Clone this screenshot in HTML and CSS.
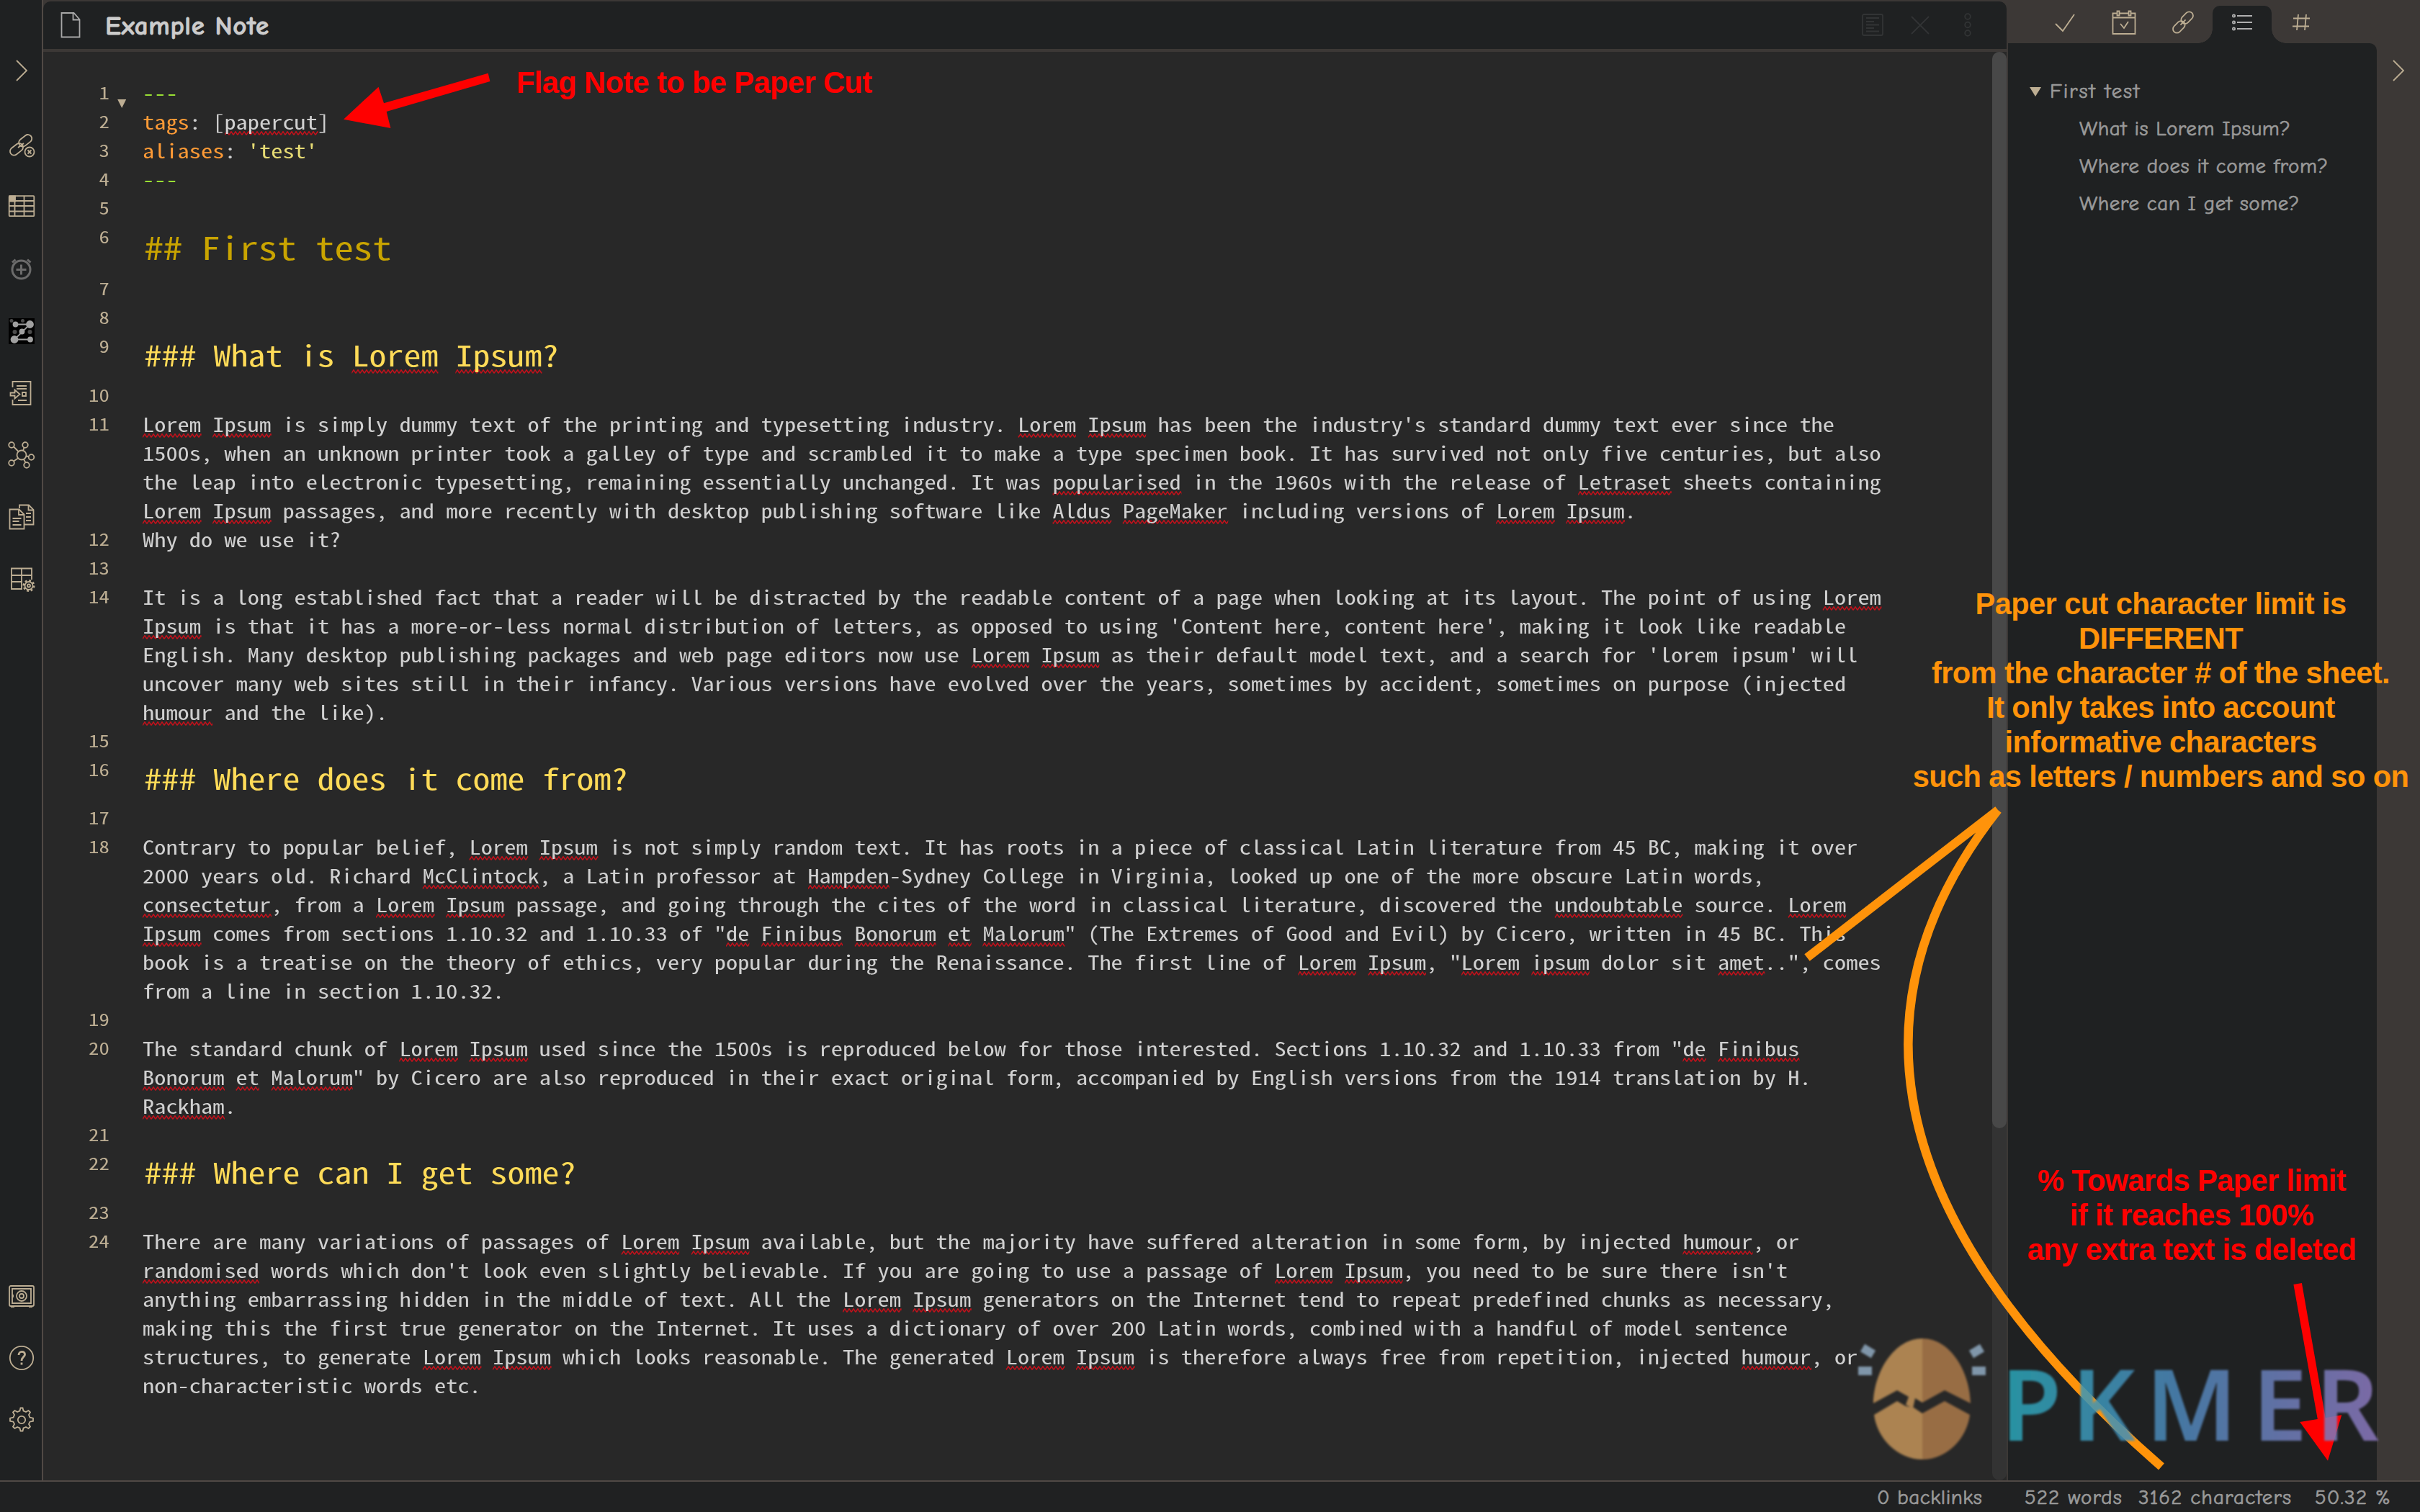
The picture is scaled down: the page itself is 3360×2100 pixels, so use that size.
FILE: index.html
```
<!DOCTYPE html>
<html lang="en">
<head>
  <meta charset="UTF-8">
  <meta name="viewport" content="width=device-width, initial-scale=1.0">
  <title>Example Note</title>
  <link rel="stylesheet" href="styles.css">
</head>
<body>
  <div class="app">
    <div class="workspace">
      <!-- Left ribbon -->
      <nav class="ribbon">
        <div class="ribbon-group">
          <div class="ribbon-item collapse"><svg width="58" height="40" viewBox="0 0 58 40"><path d="M23 6l14 14-14 14"/></svg></div>
          <div class="ribbon-item"><svg width="58" height="40" viewBox="0 0 58 40"><g transform="translate(0 2) rotate(-38 29 18)"><rect x="11" y="13" width="20" height="11" rx="5.5"/><rect x="28" y="11" width="20" height="11" rx="5.5"/><path d="M24 18h10"/></g><circle class="solid-bg" cx="41" cy="29" r="6.500"/><path d="M38.500 26.500l5 5M43.500 26.500l-5 5"/></svg></div>
          <div class="ribbon-item"><svg width="58" height="40" viewBox="0 0 58 40"><g transform="translate(0 -1.500)"><rect x="12.700" y="5.700" width="34.600" height="28" rx="1"/><path d="M20.500 6v28M33.500 6v28M13 12.500h34M13 19.500h34M13 27h34"/><path class="fill" d="M13 6h8v7h-8z"/></g></svg></div>
          <div class="ribbon-item dim"><svg width="58" height="40" viewBox="0 0 58 40"><circle cx="29.500" cy="20.500" r="12.500"/><path d="M29.500 13.500v14M22.500 20.500h14M17 10.500l4.500-4M42.500 10.500l-4.500-4"/></svg></div>
          <div class="ribbon-item"><svg width="58" height="40" viewBox="0 0 58 40"><path class="black" d="M12 2h36v36H12z"/><g class="dark"><circle cx="16" cy="5.500" r="2.500"/><circle cx="31.500" cy="5.500" r="2.500"/><circle cx="20.500" cy="21" r="3"/><circle cx="41.500" cy="21" r="3"/></g><g class="light"><path d="M21.500 10.500h20L20 31.500h22"/><circle cx="21.500" cy="10.500" r="3"/><circle cx="41.500" cy="10.500" r="4.500"/><circle cx="30.500" cy="20.500" r="3"/><circle cx="20" cy="31.500" r="4.500"/><circle cx="42" cy="31.500" r="3"/></g></svg></div>
          <div class="ribbon-item"><svg width="58" height="40" viewBox="0 0 58 40"><path d="M17.500 12V4h25v32h-25v-7M23 10h14M23 14h14M25 30h12"/><path d="M14.500 19.500h6v-4l7 6-7 6v-4h-6zM31 19h5v5h-5z"/></svg></div>
          <div class="ribbon-item"><svg width="58" height="40" viewBox="0 0 58 40"><circle cx="30" cy="20" r="6.500"/><circle cx="16" cy="6" r="3.800"/><circle cx="35" cy="6" r="3.800"/><circle cx="43.500" cy="23" r="3.800"/><circle cx="37" cy="34" r="3.800"/><circle cx="16" cy="31" r="3.800"/><path d="M19 8.500l6.500 6.500M33.500 9.500L32 14M36.500 21.500l3.500.700M33 26l2.500 4.500M19 28.500l6-4"/></svg></div>
          <div class="ribbon-item"><svg width="58" height="40" viewBox="0 0 58 40"><path d="M27 8V3.500h13l6.500 6.500v20.500H34"/><path d="M39.500 4v6.500h7M36 15h7M36 20h7M36 25h7"/><path d="M13.500 9.500h13l7 7v20h-20z"/><path d="M26 10v7h7M17.500 22h12M17.500 26h9M17.500 31h12"/></svg></div>
          <div class="ribbon-item"><svg width="58" height="40" viewBox="0 0 58 40"><g transform="translate(0 1)"><path d="M31 33H16V4.500h28V20M16 14h28M30 5v28M16 23h15"/><circle cx="40" cy="28.500" r="5.500"/><circle cx="40" cy="28.500" r="2"/><circle class="teeth" cx="40" cy="28.500" r="7"/></g></svg></div>
        </div>
        <div class="ribbon-group">
          <div class="ribbon-item"><svg width="58" height="40" viewBox="0 0 58 40"><rect x="13" y="6" width="34" height="28" rx="2"/><path d="M17 10h26v20H17zM15 35h5M40 35h5M18 18v4"/><circle cx="30" cy="20" r="7"/><circle cx="30" cy="20" r="3"/></svg></div>
          <div class="ribbon-item"><svg width="58" height="40" viewBox="0 0 58 40"><circle cx="30" cy="20" r="16.200"/><path class="thick" d="M26 16c0-6 9-6 8.500-.500C34.200 18.500 30 19 30 24M30 26.500v3"/></svg></div>
          <div class="ribbon-item"><svg width="58" height="40" viewBox="0 0 58 40"><path d="M27.500 7.500l1-4h3l1 4 3.500 1.500 3.500-2 2.500 2.500-2 3.500 1.500 3.700 4.500 1v4l-4.500 1-1.500 3.300 2 3.500-2.500 2.500-3.500-2-3.500 1.500-1 4h-3l-1-4-3.500-1.500-3.500 2-2.500-2.500 2-3.500-1.500-3.300-4.500-1v-4l4.500-1 1.500-3.700-2-3.500 2.500-2.500 3.500 2z"/><circle cx="30" cy="20" r="5.200"/></svg></div>
        </div>
      </nav>

      <!-- Note -->
      <main class="note">
        <header class="note-header">
          <svg class="file-icon" width="28" height="36" viewBox="0 0 28 36"><path d="M1.500 1h17l8 9v24.500h-25zM17.500 1v9.500h9"/></svg>
          <h1>Example Note</h1>
          <div class="note-actions">
            <svg width="66" height="40" viewBox="0 0 66 40"><rect x="19" y="5" width="28" height="29" rx="2"/><path d="M24 10h18M24 15h11M24 19.500h18M24 24h11M24 28.500h18"/></svg>
            <svg width="66" height="40" viewBox="0 0 66 40"><path d="M21 8l24 24M45 8L21 32"/></svg>
            <svg width="66" height="40" viewBox="0 0 66 40"><circle cx="33" cy="8" r="3.800"/><circle cx="33" cy="19.500" r="3.800"/><circle cx="33" cy="31" r="3.800"/></svg>
          </div>
        </header>
        <div class="editor">
          <div class="code">
            <div class="row"><span class="num">1<i class="fold"></i></span><p class="dash">---</p></div>
            <div class="row"><span class="num">2</span><p><b>tags</b>: [<u>papercut</u>]</p></div>
            <div class="row"><span class="num">3</span><p><b>aliases</b>: <em>'test'</em></p></div>
            <div class="row"><span class="num">4</span><p class="dash">---</p></div>
            <div class="row"><span class="num">5</span><p></p></div>
            <div class="row row-h2"><span class="num">6</span><h2>## First test</h2></div>
            <div class="row"><span class="num">7</span><p></p></div>
            <div class="row"><span class="num">8</span><p></p></div>
            <div class="row row-h3"><span class="num">9</span><h3>### What is <u>Lorem</u> <u>Ipsum</u>?</h3></div>
            <div class="row"><span class="num">10</span><p></p></div>
            <div class="row"><span class="num">11</span><p><u>Lorem</u> <u>Ipsum</u> is simply dummy text of the printing and typesetting industry. <u>Lorem</u> <u>Ipsum</u> has been the industry's standard dummy text ever since the
1500s, when an unknown printer took a galley of type and scrambled it to make a type specimen book. It has survived not only five centuries, but also
the leap into electronic typesetting, remaining essentially unchanged. It was <u>popularised</u> in the 1960s with the release of <u>Letraset</u> sheets containing
<u>Lorem</u> <u>Ipsum</u> passages, and more recently with desktop publishing software like <u>Aldus</u> <u>PageMaker</u> including versions of <u>Lorem</u> <u>Ipsum</u>.</p></div>
            <div class="row"><span class="num">12</span><p>Why do we use it?</p></div>
            <div class="row"><span class="num">13</span><p></p></div>
            <div class="row"><span class="num">14</span><p>It is a long established fact that a reader will be distracted by the readable content of a page when looking at its layout. The point of using <u>Lorem</u>
<u>Ipsum</u> is that it has a more-or-less normal distribution of letters, as opposed to using 'Content here, content here', making it look like readable
English. Many desktop publishing packages and web page editors now use <u>Lorem</u> <u>Ipsum</u> as their default model text, and a search for 'lorem ipsum' will
uncover many web sites still in their infancy. Various versions have evolved over the years, sometimes by accident, sometimes on purpose (injected
<u>humour</u> and the like).</p></div>
            <div class="row"><span class="num">15</span><p></p></div>
            <div class="row row-h3"><span class="num">16</span><h3>### Where does it come from?</h3></div>
            <div class="row"><span class="num">17</span><p></p></div>
            <div class="row"><span class="num">18</span><p>Contrary to popular belief, <u>Lorem</u> <u>Ipsum</u> is not simply random text. It has roots in a piece of classical Latin literature from 45 BC, making it over
2000 years old. Richard <u>McClintock</u>, a Latin professor at <u>Hampden</u>-Sydney College in Virginia, looked up one of the more obscure Latin words,
<u>consectetur</u>, from a <u>Lorem</u> <u>Ipsum</u> passage, and going through the cites of the word in classical literature, discovered the <u>undoubtable</u> source. <u>Lorem</u>
<u>Ipsum</u> comes from sections 1.10.32 and 1.10.33 of "<u>de</u> <u>Finibus</u> <u>Bonorum</u> <u>et</u> <u>Malorum</u>" (The Extremes of Good and Evil) by Cicero, written in 45 BC. This
book is a treatise on the theory of ethics, very popular during the Renaissance. The first line of <u>Lorem</u> <u>Ipsum</u>, "<u>Lorem</u> <u>ipsum</u> dolor sit <u>amet</u>..", comes
from a line in section 1.10.32.</p></div>
            <div class="row"><span class="num">19</span><p></p></div>
            <div class="row"><span class="num">20</span><p>The standard chunk of <u>Lorem</u> <u>Ipsum</u> used since the 1500s is reproduced below for those interested. Sections 1.10.32 and 1.10.33 from "<u>de</u> <u>Finibus</u>
<u>Bonorum</u> <u>et</u> <u>Malorum</u>" by Cicero are also reproduced in their exact original form, accompanied by English versions from the 1914 translation by H.
<u>Rackham</u>.</p></div>
            <div class="row"><span class="num">21</span><p></p></div>
            <div class="row row-h3"><span class="num">22</span><h3>### Where can I get some?</h3></div>
            <div class="row"><span class="num">23</span><p></p></div>
            <div class="row"><span class="num">24</span><p>There are many variations of passages of <u>Lorem</u> <u>Ipsum</u> available, but the majority have suffered alteration in some form, by injected <u>humour</u>, or
<u>randomised</u> words which don't look even slightly believable. If you are going to use a passage of <u>Lorem</u> <u>Ipsum</u>, you need to be sure there isn't
anything embarrassing hidden in the middle of text. All the <u>Lorem</u> <u>Ipsum</u> generators on the Internet tend to repeat predefined chunks as necessary,
making this the first true generator on the Internet. It uses a dictionary of over 200 Latin words, combined with a handful of model sentence
structures, to generate <u>Lorem</u> <u>Ipsum</u> which looks reasonable. The generated <u>Lorem</u> <u>Ipsum</u> is therefore always free from repetition, injected <u>humour</u>, or
non-characteristic words etc.</p></div>
          </div>
          <div class="scrollbar"><div class="thumb"></div></div>
        </div>
      </main>

      <!-- Outline panel -->
      <aside class="side">
        <div class="tabs">
          <div class="tab"><svg width="40" height="40" viewBox="0 0 40 40"><path d="M7 22l10 10L33 9"/></svg></div>
          <div class="tab"><svg width="40" height="40" viewBox="0 0 40 40"><path d="M4.500 7.500h31v28.500h-31zM5 13.500h30M15 22l5 6 6-9"/><path class="tab-bg" d="M10.500 4.500h3v6h-3zM26.500 4.500h3v6h-3z"/></svg></div>
          <div class="tab"><svg width="40" height="40" viewBox="0 0 40 40"><g transform="rotate(-45 20 20)"><rect x="2" y="15" width="19" height="11" rx="5.500"/><rect x="19" y="14" width="19" height="11" rx="5.500"/><path d="M15 20h10"/></g></svg></div>
          <div class="tab active"><svg width="40" height="40" viewBox="0 0 40 40"><path d="M13 11h21M13 20h21M13 29h21"/><circle cx="8.500" cy="11" r="1.600"/><circle cx="8.500" cy="20" r="1.600"/><circle cx="8.500" cy="29" r="1.600"/></svg></div>
          <div class="tab"><svg width="40" height="40" viewBox="0 0 40 40"><path d="M16 9l-2 22M27 9l-2 22M9 14.500h23M8 25.500h23"/></svg></div>
        </div>
        <ul class="outline">
          <li class="top"><i class="caret"></i>First test</li>
          <li>What is Lorem Ipsum?</li>
          <li>Where does it come from?</li>
          <li>Where can I get some?</li>
        </ul>
      </aside>
      <div class="right-edge"><svg width="60" height="40" viewBox="0 0 60 40"><path d="M23 6l14 14-14 14"/></svg></div>
    </div>

    <footer class="status">
      <span class="backlinks">0 backlinks</span>
      <span class="words">522 words</span>
      <span class="chars">3162 characters</span>
      <span class="percent">50.32 %</span>
    </footer>
  </div>

  <!-- Annotations over the window -->
  <svg class="marks" width="3360" height="2100" viewBox="0 0 3360 2100">
    <defs>
      <linearGradient id="brand" gradientUnits="userSpaceOnUse" x1="2790" y1="0" x2="3304" y2="0">
        <stop offset="0" stop-color="#2ba5b8"/>
        <stop offset=".45" stop-color="#4c86b8"/>
        <stop offset="1" stop-color="#8b76bb"/>
      </linearGradient>
      <filter id="soft"><feGaussianBlur stdDeviation="1.5"/></filter>
    </defs>
    <path class="red" d="M477 165.700L525.500 120.700 533 143.300 677.700 101.700 680.400 113 536.600 155 542.400 178z"/>
    <path class="red" d="M3184.400 1784L3195.900 1782 3228.800 1969.300 3251.300 1965.300 3232 2028.700 3193.200 1975 3217.800 1971z"/>
    <path class="orange" d="M2774 1125L2509 1330M2774 1125Q2440 1549 3001 2037"/>
    <g filter="url(#soft)" opacity=".86">
      <path fill="#c29359" d="M2669 1859C2630 1859 2602 1905 2601 1949L2634 1931 2650 1940 2646 1951 2656 1956 2659 1942 2669 1948z"/>
      <path fill="#ab794a" d="M2669 1859C2708 1859 2735 1905 2736 1949L2700 1931 2669 1948z"/>
      <path fill="#c29359" d="M2669 2027C2634 2027 2606 1997 2602 1965L2634 1946 2646 1953 2657 1955 2669 1963z"/>
      <path fill="#ab794a" d="M2669 2027C2704 2027 2731 1997 2735 1965L2700 1946 2669 1963z"/>
      <path stroke="#8fa9c0" stroke-width="12" d="M2586 1872l15 9M2752 1872l-15 9M2580 1904h19M2738 1904h19"/>
      <text class="brand" x="2778 2876 2979 3127 3215" y="2001">PKMER</text>
    </g>
  </svg>
  <p class="callout flag">Flag Note to be Paper Cut</p>
  <p class="callout limit">Paper cut character limit is
DIFFERENT
from the character # of the sheet.
It only takes into account
informative characters
such as letters / numbers and so on</p>
  <p class="callout toward">% Towards Paper limit
if it reaches 100%
any extra text is deleted</p>
</body>
</html>
```
FILE: styles.css
```
* {
  box-sizing: border-box;
}

body {
  margin: 0;
  background: #3c3836;
  font-family: "Comic Neue", "Open Sans", sans-serif;
  color: #999;
  overflow: hidden;
}

h1, h2, h3, p, ul {
  margin: 0;
  padding: 0;
  font-weight: normal;
}

svg {
  display: block;
  fill: none;
  stroke: #bdae93;
  stroke-width: 1.8;
}

.app {
  width: 3360px;
  height: 2100px;
  display: flex;
  flex-direction: column;
}

.workspace {
  height: 2056px;
  display: flex;
}

/* Ribbon */
.ribbon {
  width: 60px;
  padding: 55px 0 41px;
  border-right: 2px solid #504945;
  background: #1f2122;
  display: flex;
  flex-direction: column;
  justify-content: space-between;
}

.ribbon-item {
  height: 86px;
  display: flex;
  align-items: center;
}

.ribbon-item.collapse {
  margin-bottom: 18px;
}

.ribbon-item.dim svg {
  stroke: #6b6b6b;
  stroke-width: 3;
}

.solid-bg {
  fill: #1f2122;
}

.fill {
  fill: #bdae93;
}

.black {
  fill: #000;
  stroke: none;
}

.dark {
  fill: #4c4c4c;
  stroke: none;
}

.light {
  stroke: #a0a0a0;
}

.light circle {
  fill: #a0a0a0;
}

.teeth {
  stroke-width: 3;
  stroke-dasharray: 2.750;
}

.thick {
  stroke-width: 2.800;
}

/* Note */
.note {
  width: 2728px;
  padding-top: 2px;
  border-right: 2px solid #3c3836;
}

.note-header {
  height: 66px;
  padding-left: 24px;
  background: #1f2122;
  border-radius: 10px 10px 0 0;
  display: flex;
  align-items: center;
}

.file-icon {
  stroke: #a8a8a8;
}

.note-header h1 {
  margin-left: 34px;
  padding-top: 2px;
  font-size: 37px;
  font-weight: bold;
  letter-spacing: .7px;
  color: #ccc;
  -webkit-text-stroke: .8px #ccc;
}

.note-actions {
  margin-left: auto;
  margin-right: 21px;
  display: flex;
}

.note-actions svg {
  stroke: #323435;
}

.editor {
  height: 1984px;
  margin-top: 4px;
  background: #282828;
  display: flex;
  justify-content: space-between;
}

/* Wide monospace: the half-width face is stretched to a 0.6em pitch */
.code {
  padding-top: 37px;
  font-family: "Noto Sans Mono CJK SC", "Liberation Mono", monospace;
  font-size: 27px;
  line-height: 40px;
  font-feature-settings: "zero";
  color: #d0d0d0;
  transform: scaleX(1.2);
  transform-origin: 0 0;
}

.row {
  display: grid;
  grid-template-columns: 115px 1fr;
  min-height: 40px;
}

.row p, .row h2, .row h3 {
  white-space: pre;
}

.num {
  position: relative;
  width: 76.600px;
  height: 38px;
  font-size: 24px;
  line-height: 38px;
  text-align: right;
  color: #bdae93;
}

.fold {
  position: absolute;
  left: 86px;
  top: 29px;
  border: 5px solid transparent;
  border-top: 12px solid #bdae93;
  border-bottom: 0;
}

.row-h2 {
  height: 72px;
}

.row-h2 h2 {
  padding-left: 2px;
  font-size: 44px;
  line-height: 67px;
  color: #c9a400;
}

.row-h3 {
  height: 67.6px;
}

.row-h3 h3 {
  padding-left: 2px;
  font-size: 40px;
  line-height: 62px;
  color: #ffdb58;
}

.dash {
  color: #9be234;
}

.row b {
  font-weight: normal;
  color: #fd9a36;
}

.row em {
  font-style: normal;
  color: #e6db74;
}

/* Misspelled words */
.row u {
  text-decoration: none;
  background: url("data:image/svg+xml,%3Csvg xmlns='http://www.w3.org/2000/svg' width='5' height='6'%3E%3Cpath d='M0 5.500L2.500 .8 5 5.500' fill='none' stroke='%23c8101a' stroke-width='1.300'/%3E%3C/svg%3E") repeat-x 0 100%;
}

.row h3 u {
  background-position: 0 calc(100% - 2px);
}

.scrollbar {
  width: 20px;
  border-radius: 10px;
  background: #333;
}

.thumb {
  height: 1495px;
  border-radius: 10px;
  background: #484848;
}

/* Side panel */
.side {
  width: 512px;
  display: flex;
  flex-direction: column;
}

.tabs {
  height: 60px;
  padding-left: 38px;
  display: flex;
}

.tab {
  width: 82px;
  padding-top: 11px;
  display: flex;
  justify-content: center;
}

.tab-bg {
  fill: #3c3836;
}

.tab.active {
  position: relative;
  margin-top: 8px;
  padding-top: 3px;
  background: #1f2122;
  border-radius: 10px 10px 0 0;
}

.tab.active svg {
  stroke: #b0b0b0;
}

/* Flared feet of the active tab */
.tab.active::before, .tab.active::after {
  content: "";
  position: absolute;
  bottom: 0;
  left: -20px;
  width: 20px;
  height: 20px;
  background: radial-gradient(circle at 0 0, transparent 19.5px, #1f2122 20px);
}

.tab.active::after {
  left: 82px;
  background: radial-gradient(circle at 100% 0, transparent 19.5px, #1f2122 20px);
}

.outline {
  flex: 1;
  padding: 41px 0 0 99px;
  background: #1f2122;
  border-radius: 0 10px 0 0;
  list-style: none;
  font-size: 29px;
  line-height: 52px;
  letter-spacing: .55px;
  white-space: nowrap;
  -webkit-text-stroke: .7px #999;
}

.outline .top {
  display: flex;
  align-items: center;
  margin-left: -69px;
  letter-spacing: 1.9px;
}

.caret {
  margin-right: 12px;
  border: 8px solid transparent;
  border-top: 13px solid #bdae93;
  border-bottom: 0;
}

.right-edge {
  width: 60px;
  padding-top: 78px;
}

/* Status bar */
.status {
  height: 44px;
  border-top: 2px solid #504945;
  background: #202122;
  display: flex;
  font-size: 29px;
  line-height: 44px;
  letter-spacing: 1.1px;
  white-space: nowrap;
  -webkit-text-stroke: .7px #999;
}

.backlinks {
  margin-left: 2606px;
  width: 205px;
  letter-spacing: .5px;
}

.words {
  width: 158px;
}

.chars {
  width: 245px;
}

/* Annotations */
.marks {
  position: absolute;
  left: 0;
  top: 0;
  stroke: none;
}

.red {
  fill: #f00;
}

.orange {
  stroke: #ff930a;
  stroke-width: 12;
}

.brand {
  fill: url(#brand);
  font-family: "Noto Sans", sans-serif;
  font-size: 137px;
  font-weight: 600;
}

.callout {
  position: absolute;
  font: bold 41.67px/48px "Liberation Sans", sans-serif;
  letter-spacing: -.63px;
  text-align: center;
  white-space: pre;
}

.flag {
  left: 717px;
  top: 91px;
  color: #f00;
}

.limit {
  left: 2640px;
  top: 815px;
  width: 720px;
  color: #ff930a;
}

.toward {
  left: 2793px;
  top: 1616px;
  width: 500px;
  color: #f00;
}
```
